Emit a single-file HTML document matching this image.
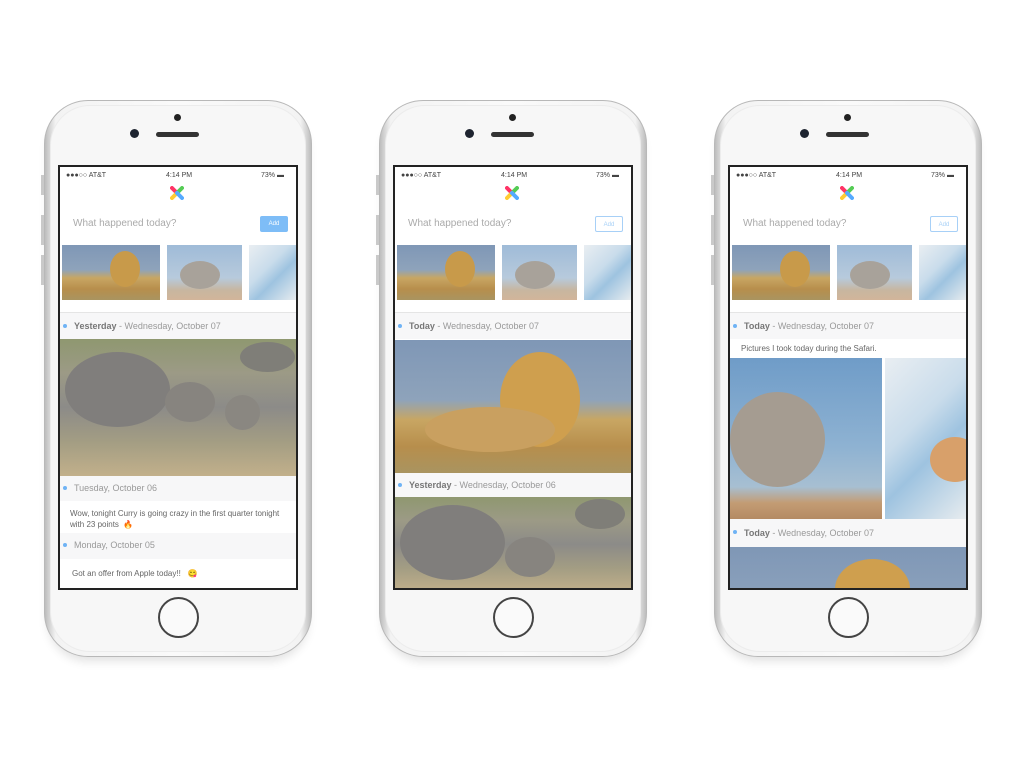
<!DOCTYPE html><html><head><meta charset="utf-8"><style>
*{margin:0;padding:0;box-sizing:border-box}
body{width:1024px;height:768px;background:#fff;position:relative;overflow:hidden;font-family:"Liberation Sans",sans-serif}
.ph{position:absolute;top:100px;width:268px;height:557px}
.body{position:absolute;left:0;top:0;width:268px;height:557px;border-radius:44px;background:linear-gradient(90deg,#bdbdbd,#f3f3f3 4%,#fafafa 50%,#f3f3f3 96%,#bdbdbd);border:1px solid #b8b8b8;box-shadow:0 8px 10px -4px rgba(0,0,0,.12)}
.inner{position:absolute;left:5px;top:4px;right:5px;bottom:4px;border-radius:40px;background:#f7f7f7;border:1px solid #ececec}
.btn{position:absolute;background:#c9c9c9;width:3px;left:-3px}
.cam{position:absolute;left:130px;top:14px;width:7px;height:7px;border-radius:50%;background:#222}
.fcam{position:absolute;left:86px;top:29px;width:9px;height:9px;border-radius:50%;background:#1e2430}
.spk{position:absolute;left:112px;top:32px;width:43px;height:5px;border-radius:3px;background:#333}
.home{position:absolute;left:114px;top:497px;width:41px;height:41px;border-radius:50%;border:2px solid #444;background:#fafafa}
.scr{position:absolute;left:14px;top:65px;width:240px;height:425px;border:2px solid #222;background:#fff;overflow:hidden}
.scr div,.scr span{position:absolute}
.sb{font-size:7px;color:#444;top:5px}
.ph-t{left:13px;top:51px;font-size:10px;color:#aaa}
.add{left:200px;top:49px;width:28px;height:16px;border-radius:2px;font-size:6px;text-align:center;line-height:16px}
.hdr{left:0;width:236px;background:#f7f7f8;font-size:9px;color:#999;white-space:nowrap}
.hdr b{color:#777}
.dot{width:4px;height:4px;border-radius:50%;background:#6fb3f5}
.txt{font-size:8px;color:#666;line-height:11px}
.lion{background:linear-gradient(180deg,#7f97b6 0%,#8ea3bb 45%,#c8a663 60%,#b78e4c 80%,#a99460 100%)}
.eleT{background:linear-gradient(180deg,#9fbbd8 0%,#b7cadc 60%,#c7b6a0 82%,#d2b59a 100%)}
.gir{background:linear-gradient(135deg,#e9eef2 0%,#c9dceb 40%,#9ec3e0 60%,#e7ecef 100%)}
.eles{background:linear-gradient(180deg,#8f9870 0%,#9c9a86 25%,#8c8b88 50%,#a39d83 75%,#c2b08b 100%)}
.blob{border-radius:50%}
</style></head><body>

<div class="ph" style="left:44px">
<div class="body"><div class="inner"></div></div>
<div class="btn" style="top:75px;height:20px"></div><div class="btn" style="top:115px;height:30px"></div><div class="btn" style="top:155px;height:30px"></div>
<div class="cam"></div><div class="fcam"></div><div class="spk"></div><div class="home"></div>
<div class="scr">
<div class="sb" style="left:6px">●●●○○ AT&amp;T</div><div class="sb" style="left:106px">4:14 PM</div><div class="sb" style="left:201px">73% ▬</div>
<div style="left:110px;top:19px;width:14px;height:14px"><svg width="14" height="14"><path d="M2 2L7 7" stroke="#f36" stroke-width="4" stroke-linecap="round"/><path d="M12 2L7 7" stroke="#5c5" stroke-width="4" stroke-linecap="round"/><path d="M2 12L7 7" stroke="#fc3" stroke-width="4" stroke-linecap="round"/><path d="M12 12L7 7" stroke="#5af" stroke-width="4" stroke-linecap="round"/></svg></div>
<div class="ph-t">What happened today?</div>
<div class="add" style="background:#7ebdf7;color:#fff">Add</div>
<div class="lion" style="left:2px;top:78px;width:98px;height:55px"></div>
<div class="blob" style="left:50px;top:84px;width:30px;height:36px;background:#c89a4a"></div>
<div class="eleT" style="left:107px;top:78px;width:75px;height:55px"></div>
<div class="blob" style="left:120px;top:94px;width:40px;height:28px;background:#a8a29a"></div>
<div class="gir" style="left:189px;top:78px;width:47px;height:55px"></div>
<div style="left:0;top:145px;width:236px;height:1px;background:#e5e5e5"></div>
<div class="hdr" style="top:146px;height:26px"><span class="dot" style="left:3px;top:11px"></span><span style="left:14px;top:8px"><b>Yesterday</b> - Wednesday, October 07</span></div>
<div class="eles" style="left:0;top:172px;width:236px;height:137px"></div>
<div class="blob" style="left:5px;top:185px;width:105px;height:75px;background:#807e7c"></div>
<div class="blob" style="left:105px;top:215px;width:50px;height:40px;background:#87847f"></div>
<div class="blob" style="left:165px;top:228px;width:35px;height:35px;background:#8a8781"></div>
<div class="blob" style="left:180px;top:175px;width:55px;height:30px;background:#7f7e78"></div>
<div class="hdr" style="top:309px;height:25px"><span class="dot" style="left:3px;top:10px"></span><span style="left:14px;top:7px">Tuesday, October 06</span></div>
<div class="txt" style="left:10px;top:341px;width:220px">Wow, tonight Curry is going crazy in the first quarter tonight with 23 points &nbsp;🔥</div>
<div class="hdr" style="top:366px;height:26px"><span class="dot" style="left:3px;top:10px"></span><span style="left:14px;top:7px">Monday, October 05</span></div>
<div class="txt" style="left:12px;top:401px">Got an offer from Apple today!! &nbsp;&nbsp;😋</div>
</div></div>

<div class="ph" style="left:379px">
<div class="body"><div class="inner"></div></div>
<div class="btn" style="top:75px;height:20px"></div><div class="btn" style="top:115px;height:30px"></div><div class="btn" style="top:155px;height:30px"></div>
<div class="cam"></div><div class="fcam"></div><div class="spk"></div><div class="home"></div>
<div class="scr">
<div class="sb" style="left:6px">●●●○○ AT&amp;T</div><div class="sb" style="left:106px">4:14 PM</div><div class="sb" style="left:201px">73% ▬</div>
<div style="left:110px;top:19px;width:14px;height:14px"><svg width="14" height="14"><path d="M2 2L7 7" stroke="#f36" stroke-width="4" stroke-linecap="round"/><path d="M12 2L7 7" stroke="#5c5" stroke-width="4" stroke-linecap="round"/><path d="M2 12L7 7" stroke="#fc3" stroke-width="4" stroke-linecap="round"/><path d="M12 12L7 7" stroke="#5af" stroke-width="4" stroke-linecap="round"/></svg></div>
<div class="ph-t">What happened today?</div>
<div class="add" style="border:1px solid #a7d0f7;color:#a7d0f7;background:#fff">Add</div>
<div class="lion" style="left:2px;top:78px;width:98px;height:55px"></div>
<div class="blob" style="left:50px;top:84px;width:30px;height:36px;background:#c89a4a"></div>
<div class="eleT" style="left:107px;top:78px;width:75px;height:55px"></div>
<div class="blob" style="left:120px;top:94px;width:40px;height:28px;background:#a8a29a"></div>
<div class="gir" style="left:189px;top:78px;width:47px;height:55px"></div>
<div style="left:0;top:145px;width:236px;height:1px;background:#e5e5e5"></div>
<div class="hdr" style="top:146px;height:26px"><span class="dot" style="left:3px;top:11px"></span><span style="left:14px;top:8px"><b>Today</b> - Wednesday, October 07</span></div>
<div class="lion" style="left:0;top:173px;width:236px;height:133px"></div>
<div class="blob" style="left:105px;top:185px;width:80px;height:95px;background:#cf9f4e"></div>
<div class="blob" style="left:30px;top:240px;width:130px;height:45px;background:#c9a060"></div>
<div class="hdr" style="top:306px;height:24px"><span class="dot" style="left:3px;top:10px"></span><span style="left:14px;top:7px"><b>Yesterday</b> - Wednesday, October 06</span></div>
<div class="eles" style="left:0;top:330px;width:236px;height:95px"></div>
<div class="blob" style="left:5px;top:338px;width:105px;height:75px;background:#807e7c"></div>
<div class="blob" style="left:110px;top:370px;width:50px;height:40px;background:#87847f"></div>
<div class="blob" style="left:180px;top:332px;width:50px;height:30px;background:#7f7e78"></div>
</div></div>

<div class="ph" style="left:714px">
<div class="body"><div class="inner"></div></div>
<div class="btn" style="top:75px;height:20px"></div><div class="btn" style="top:115px;height:30px"></div><div class="btn" style="top:155px;height:30px"></div>
<div class="cam"></div><div class="fcam"></div><div class="spk"></div><div class="home"></div>
<div class="scr">
<div class="sb" style="left:6px">●●●○○ AT&amp;T</div><div class="sb" style="left:106px">4:14 PM</div><div class="sb" style="left:201px">73% ▬</div>
<div style="left:110px;top:19px;width:14px;height:14px"><svg width="14" height="14"><path d="M2 2L7 7" stroke="#f36" stroke-width="4" stroke-linecap="round"/><path d="M12 2L7 7" stroke="#5c5" stroke-width="4" stroke-linecap="round"/><path d="M2 12L7 7" stroke="#fc3" stroke-width="4" stroke-linecap="round"/><path d="M12 12L7 7" stroke="#5af" stroke-width="4" stroke-linecap="round"/></svg></div>
<div class="ph-t">What happened today?</div>
<div class="add" style="border:1px solid #a7d0f7;color:#a7d0f7;background:#fff">Add</div>
<div class="lion" style="left:2px;top:78px;width:98px;height:55px"></div>
<div class="blob" style="left:50px;top:84px;width:30px;height:36px;background:#c89a4a"></div>
<div class="eleT" style="left:107px;top:78px;width:75px;height:55px"></div>
<div class="blob" style="left:120px;top:94px;width:40px;height:28px;background:#a8a29a"></div>
<div class="gir" style="left:189px;top:78px;width:47px;height:55px"></div>
<div style="left:0;top:145px;width:236px;height:1px;background:#e5e5e5"></div>
<div class="hdr" style="top:146px;height:26px"><span class="dot" style="left:3px;top:11px"></span><span style="left:14px;top:8px"><b>Today</b> - Wednesday, October 07</span></div>
<div class="txt" style="left:11px;top:176px">Pictures I took today during the Safari.</div>
<div style="left:0;top:191px;width:152px;height:161px;background:linear-gradient(180deg,#6f9cc8 0%,#8eb2d2 55%,#a7bfd2 80%,#c39c74 90%,#b48a64 100%)"></div>
<div class="blob" style="left:0;top:225px;width:95px;height:95px;background:#a59c91"></div>
<div class="gir" style="left:155px;top:191px;width:81px;height:161px"></div>
<div class="blob" style="left:200px;top:270px;width:50px;height:45px;background:#d8a06a"></div>
<div class="hdr" style="top:352px;height:28px"><span class="dot" style="left:3px;top:11px"></span><span style="left:14px;top:9px"><b>Today</b> - Wednesday, October 07</span></div>
<div class="lion" style="left:0;top:380px;width:236px;height:45px;background:linear-gradient(180deg,#7f97b6,#8aa0bb)"></div>
<div class="blob" style="left:105px;top:392px;width:75px;height:60px;background:#cf9f4e"></div>
</div></div>

</body></html>
